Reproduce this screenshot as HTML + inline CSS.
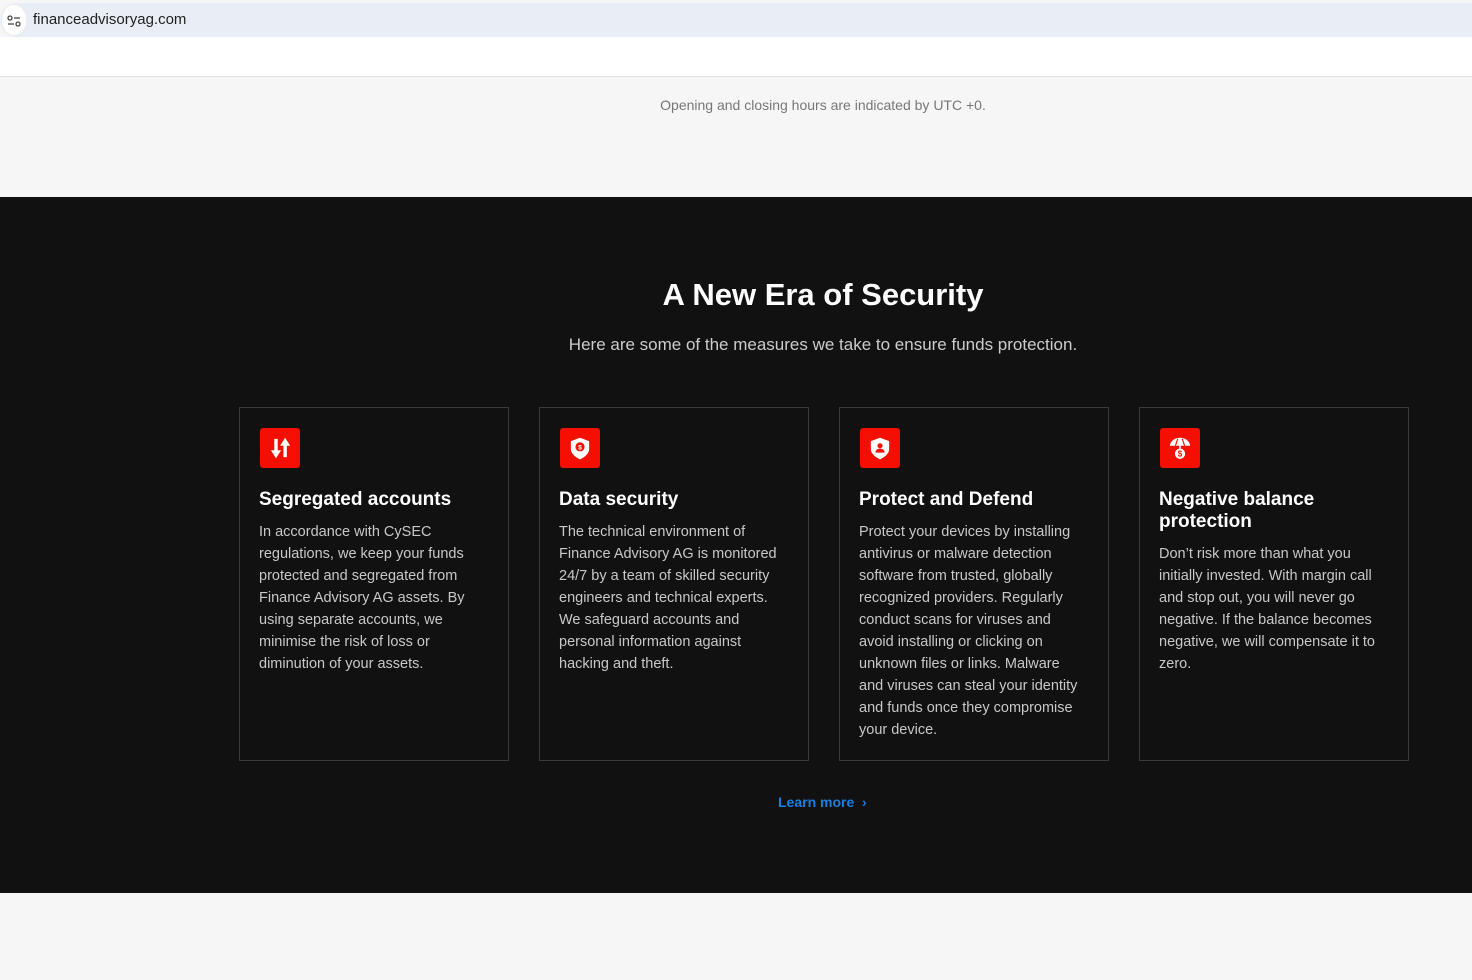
<!DOCTYPE html>
<html><head><meta charset="utf-8"><style>
*{margin:0;padding:0;box-sizing:border-box}
body{width:1472px;height:980px;overflow:hidden;background:#f6f6f6;font-family:"Liberation Sans",sans-serif;position:relative}
.bar{position:absolute;left:0;top:3px;width:1472px;height:34px;background:#e9eef6;border-radius:17px 0 0 17px}
.bar .ic{position:absolute;left:2px;top:2px;width:24px;height:30px;border-radius:50%;background:#fff}
.bar .url{position:absolute;left:33px;top:8px;font-size:15px;color:#1f1f1f}
.white{position:absolute;top:37px;left:0;width:1472px;height:40px;background:#fff;border-bottom:1px solid #e3e3e3}
.hours{position:absolute;top:97px;left:0;width:1646px;text-align:center;font-size:14px;color:#777}
.dark{position:absolute;top:197px;left:0;width:1472px;height:696px;background:#111}
h1{position:absolute;top:80px;left:0;width:1646px;text-align:center;color:#fff;font-size:31px;font-weight:bold}
.sub{position:absolute;top:138px;left:0;width:1646px;text-align:center;color:#ccc;font-size:17px}
.card{position:absolute;top:210px;width:270px;height:354px;border:1px solid #3a3a3a;padding:20px 21px 20px 19px}
.icon{width:40px;height:40px;background:#f40f02;border-radius:3px;display:flex;align-items:center;justify-content:center;margin-left:1px}
.card h3{color:#fff;font-size:19px;font-weight:bold;margin-top:21px;line-height:22px}
.card p{color:#c8c8c8;font-size:14.5px;line-height:22px;margin-top:10px}
.lm{position:absolute;top:597px;left:778px;color:#1a7fe0;font-size:14px;font-weight:bold}
</style></head><body>
<div class="bar"><div class="ic"><svg width="24" height="30" viewBox="0 0 24 30"><circle cx="8" cy="13" r="2" fill="none" stroke="#444" stroke-width="1.3"/><line x1="12" y1="13" x2="18" y2="13" stroke="#444" stroke-width="1.3"/><line x1="6" y1="19" x2="12" y2="19" stroke="#444" stroke-width="1.3"/><circle cx="16" cy="19" r="2" fill="none" stroke="#444" stroke-width="1.3"/></svg></div><div class="url">financeadvisoryag.com</div></div>
<div class="white"></div>
<div class="hours">Opening and closing hours are indicated by UTC +0.</div>
<div class="dark">
<h1>A New Era of Security</h1>
<div class="sub">Here are some of the measures we take to ensure funds protection.</div>
<div class="card" style="left:239px"><div class="icon"><svg width="32" height="32" viewBox="0 0 28 28" fill="#fff"><path d="M9 6h3v10h3l-4.5 7L6 16h3z"/><path d="M17 22h3V12h3l-4.5-7L14 12h3z"/></svg></div><h3>Segregated accounts</h3><p>In accordance with CySEC regulations, we keep your funds protected and segregated from Finance Advisory AG assets. By using separate accounts, we minimise the risk of loss or diminution of your assets.</p></div>
<div class="card" style="left:539px"><div class="icon"><svg width="32" height="32" viewBox="0 0 28 28"><path d="M14 5l8 3v7c0 4-4 7-8 9-4-2-8-5-8-9V8z" fill="#fff"/><circle cx="14" cy="13" r="4" fill="#f40f02"/><text x="14" y="15.5" font-size="6" fill="#fff" text-anchor="middle" font-family="Liberation Sans" font-weight="bold">$</text></svg></div><h3>Data security</h3><p>The technical environment of Finance Advisory AG is monitored 24/7 by a team of skilled security engineers and technical experts. We safeguard accounts and personal information against hacking and theft.</p></div>
<div class="card" style="left:839px"><div class="icon"><svg width="32" height="32" viewBox="0 0 28 28"><path d="M14 5l8 3v7c0 4-4 7-8 9-4-2-8-5-8-9V8z" fill="#fff"/><circle cx="14" cy="12" r="2.2" fill="#f40f02"/><path d="M10 18c0-2.5 2-3.5 4-3.5s4 1 4 3.5z" fill="#f40f02"/></svg></div><h3>Protect and Defend</h3><p>Protect your devices by installing antivirus or malware detection software from trusted, globally recognized providers. Regularly conduct scans for viruses and avoid installing or clicking on unknown files or links. Malware and viruses can steal your identity and funds once they compromise your device.</p></div>
<div class="card" style="left:1139px"><div class="icon"><svg width="32" height="32" viewBox="0 0 28 28"><path d="M5 12c1-5 5-7 9-7s8 2 9 7z" fill="#fff"/><line x1="14" y1="12" x2="14" y2="15" stroke="#fff" stroke-width="1.4"/><path d="M10 12l2-6M18 12l-2-6" stroke="#f40f02" stroke-width="1"/><circle cx="14" cy="19" r="4.5" fill="#fff"/><text x="14" y="21.5" font-size="7" fill="#f40f02" text-anchor="middle" font-family="Liberation Sans" font-weight="bold">$</text></svg></div><h3>Negative balance protection</h3><p>Don’t risk more than what you initially invested. With margin call and stop out, you will never go negative. If the balance becomes negative, we will compensate it to zero.</p></div>
<div class="lm">Learn more &nbsp;›</div>
</div>
</body></html>
